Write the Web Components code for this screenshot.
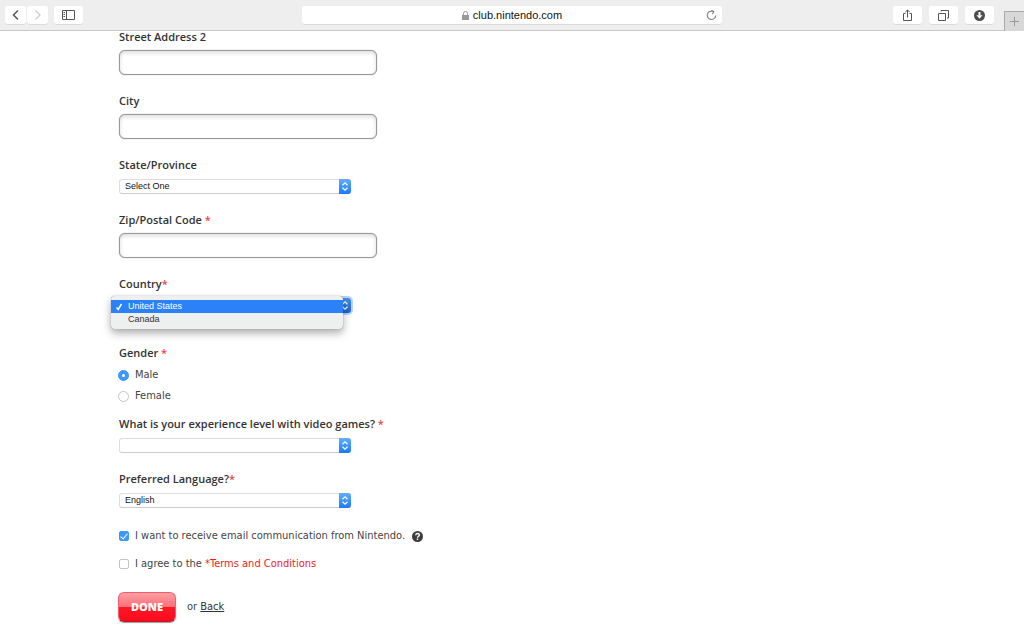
<!DOCTYPE html>
<html lang="en">
<head>
<meta charset="utf-8">
<meta name="viewport" content="width=device-width, initial-scale=1">
<title>Club Nintendo</title>
<style>
  body { margin: 0; background: #fff; color: #444; font: 11px/12px "DejaVu Sans Condensed", "Open Sans", sans-serif; }
</style>
</head>
<body>
<browser-toolbar>club.nintendo.com</browser-toolbar>
<account-form></account-form>

<script>
const define = (name, html, setup) => customElements.define(name, class extends HTMLElement {
  connectedCallback() {
    if (this.shadowRoot) return;
    const root = this.attachShadow({ mode: "open" });
    root.innerHTML = "<style>:host,*{box-sizing:border-box}</style>" + html;
    if (setup) setup(this, root);
  }
});

define("tool-button", `
  <style>
    :host { display: block; }
    button { display: flex; align-items: center; justify-content: center; width: 29px; height: 18px; padding: 0;
      border: 0; border-radius: 3px; background: #fff; color: #555; box-shadow: 0 1px 0 #dcdcdc; }
    :host([narrow]) button { width: 21px; }
    :host([faded]) button { color: #ccc; }
  </style>
  <button type="button"><slot></slot></button>`,
  (host, root) => root.querySelector("button").setAttribute("aria-label", host.getAttribute("name")));

define("browser-toolbar", `
  <style>
    :host { display: grid; grid-template-columns: 1fr 41% 1fr; height: 31px; background: #eee; border-bottom: 1px solid #c8c8c8; }
    nav, .right { display: flex; align-items: flex-start; padding-top: 6px; }
    nav { padding-left: 5px; gap: 1px; }
    nav tool-button:last-child { margin-left: 5px; }
    .right { justify-content: flex-end; gap: 7px; padding-top: 6px; }
    .address { display: grid; grid-template-columns: 21px 1fr 21px; align-items: center; height: 18px; margin-top: 6px;
      background: #fff; border-radius: 3px; box-shadow: 0 1px 0 #dcdcdc; }
    .url { grid-column: 2; display: flex; align-items: center; justify-content: center; gap: 4px; color: #111;
      font: 11px/18px "Liberation Sans", Arial, sans-serif; }
    svg { display: block; fill: none; stroke: currentColor; }
    .reload { padding: 0; border: 0; background: none; color: #888; justify-self: center; }
    .new { display: grid; place-items: center; width: 20px; height: 20px; margin: 5px 0 0 3px; padding: 0; color: #999;
      background: #d8d8d8; border: solid #aaa; border-width: 1px 0 0 1px; }
  </style>
  <nav>
    <tool-button narrow name="Back"><svg width="8" height="12" stroke-width="1.500"><path d="M6 1.500 1.500 6l4.500 4.500"/></svg></tool-button>
    <tool-button narrow faded name="Forward"><svg width="8" height="12" stroke-width="1.300"><path d="M1.500 1.500 6 6l-4.500 4.500"/></svg></tool-button>
    <tool-button name="Sidebar"><svg width="13" height="10"><path d="M.5.5h12v9H.5zM4.500.5v9M1.500 2.500H3M1.500 4.500H3M1.500 6.500H3"/></svg></tool-button>
  </nav>
  <div class="address">
    <div class="url"><svg width="7" height="9" style="color:#999"><path d="M1.500 4V2.500a2 2 0 0 1 4 0V4"/><path d="M0 4h7v5H0z" fill="currentColor" stroke="none"/></svg><slot></slot></div>
    <button class="reload" type="button" aria-label="Reload"><svg width="11" height="11" stroke-width="1.200"><path d="M7.500 1.600A4.200 4.200 0 1 0 9.700 5.500M5.300.2l2.500 1.500-1.500 2.500"/></svg></button>
  </div>
  <div class="right">
    <tool-button name="Share"><svg width="11" height="13"><path d="M3.500 4.500h-2v7h8v-7h-2M5.500 8.500V1M3.300 3.200l2.200-2.200 2.200 2.200"/></svg></tool-button>
    <tool-button name="Show tabs"><svg width="11" height="11"><path d="M.5 3.500h7v7h-7zM3 1.500V.5h7.500V8h-1.500"/></svg></tool-button>
    <tool-button name="Downloads"><svg width="11" height="11"><circle cx="5.500" cy="5.500" r="5.500" fill="#4d4d4d" stroke="none"/><path d="M5.500 2v3.500" stroke="#fff" stroke-width="2"/><path d="M2.500 5.200h6l-3 3.500z" fill="#fff" stroke="none"/></svg></tool-button>
    <button class="new" type="button" aria-label="New tab"><svg width="9" height="9"><path d="M4.500 0v9M0 4.500h9"/></svg></button>
  </div>`);

/* Heading shared by text boxes, menus and the radio group */
const headingStyle = `.title{display:block;padding:0;font:600 11px/12px "Open Sans","Noto Sans",sans-serif;color:#333;white-space:nowrap}.req{color:#f0434b}`;
const fillHeading = (host, root) => {
  root.querySelector(".title").firstChild.data = host.getAttribute("label");
  const mark = host.getAttribute("required-mark");
  root.querySelector(".req").textContent = mark === null ? "" : mark === "spaced" ? " *" : "*";
};

define("text-field", `
  <style>
    :host { display: block; }
    ${headingStyle}
    input { display: block; width: 100%; max-width: 258px; height: 25px; margin-top: 7px; padding: 0 6px; font: inherit;
      border: 1px solid #999; border-radius: 6px; background: #fff; outline: 0;
      box-shadow: inset 0 2px 4px #ddd, 0 0 1px #999; }
  </style>
  <label class="title" for="box">-<span class="req"></span></label>
  <input id="box" type="text">`, fillHeading);

define("select-field", `
  <style>
    :host { display: block; }
    ${headingStyle}
    .control { position: relative; display: grid; grid-template-columns: 1fr 12px; max-width: 232px; margin-top: 8px; }
    select { grid-area: 1 / 1 / 2 / 3; appearance: none; width: 100%; height: 15px; padding: 0 16px 0 5px; margin: 0;
      border: 1px solid #ddd; border-bottom-color: #ccc; border-radius: 3px; background: #fff; color: #111; outline: 0;
      font: 9px/13px "Liberation Sans", Arial, sans-serif; }
    svg { grid-area: 1 / 2; pointer-events: none; z-index: 1; border-radius: 0 3px 3px 0; background: linear-gradient(#62aefb, #1a7bfa); fill: none; stroke: #fff; stroke-width: 1.200; }
    :host([open]) svg { background: linear-gradient(#4b8fe4, #1262d6); box-shadow: 0 0 0 2px #b5d4fa; }
  </style>
  <label class="title" for="menu">-<span class="req"></span></label>
  <div class="control">
    <select id="menu"></select>
    <svg width="12" height="15"><path d="M3.500 6.200 6 3.800 8.500 6.200M3.500 8.800 6 11.200 8.500 8.800"/></svg>
    <slot></slot>
  </div>`,
  (host, root) => {
    fillHeading(host, root);
    const select = root.querySelector("select");
    host.getAttribute("options").split(",").forEach(text => select.add(new Option(text, text)));
  });

define("option-menu", `
  <style>
    :host { position: absolute; z-index: 2; top: -2px; left: -8px; right: 8px; padding: 4px 0 3px; border-radius: 4px;
      background: #eeefef; color: #333; box-shadow: 0 0 1px #777, 0 4px 9px #0005; font: 9px/13px "Liberation Sans", Arial, sans-serif; }
    div[role=option] { display: grid; grid-template-columns: 8px 1fr; gap: 5px; align-items: center; height: 13px; padding-left: 4px; }
    [aria-selected=true] { color: #fff; background: #2b82f8; }
    span { grid-column: 2; }
    svg { fill: none; stroke: #fff; stroke-width: 1.500; }
  </style>
  <div role="listbox" aria-label="Country">
    <div role="option" aria-selected="true"><svg width="8" height="8"><path d="M1.500 4.500 3.200 6.500 6.500 1"/></svg><span>United States</span></div>
    <div role="option" aria-selected="false"><span>Canada</span></div>
  </div>`);

define("choice-row", `
  <style>
    :host { display: block; }
    .row { display: flex; align-items: center; }
    label { line-height: 16px; white-space: nowrap; }
    input { flex: none; appearance: none; display: grid; place-items: center; width: 10px; height: 10px; margin: 0 6px 0 0;
      border: 1px solid #c4c4c4; border-radius: 2px; background: #fff; }
    input[type=radio] { width: 11px; height: 11px; margin-left: -1px; border-radius: 50%; }
    input:checked { border-color: #3b99fc; background: #3b99fc; }
    input[type=radio]:checked::before { content: ""; width: 3px; height: 3px; border-radius: 50%; background: #fff; }
    input[type=checkbox]:checked::before { content: ""; width: 3px; height: 6px; margin-bottom: 2px; border: solid #fff;
      border-width: 0 1px 1px 0; transform: rotate(40deg); }
  </style>
  <div class="row"><input id="choice"><label for="choice"><slot></slot></label><slot name="after"></slot></div>`,
  (host, root) => {
    const input = root.querySelector("input");
    input.type = host.getAttribute("type");
    input.checked = host.hasAttribute("checked");
    if (input.type === "radio") input.addEventListener("change", () => {
      for (const other of host.parentNode.querySelectorAll("choice-row"))
        if (other !== host) other.shadowRoot.querySelector("input").checked = false;
    });
  });

define("radio-group", `
  <style>
    :host { display: block; }
    ${headingStyle}
    fieldset { margin: 0; padding: 0; border: 0; min-width: 0; }
    .choices { display: grid; gap: 5px; margin-top: 8px; }
  </style>
  <fieldset><legend class="title">-<span class="req"></span></legend><div class="choices"><slot></slot></div></fieldset>`, fillHeading);

define("submit-button", `
  <style>
    :host { display: block; }
    button { display: block; width: 58px; height: 30px; padding: 0; border: 1px solid #f0626b; border-bottom-color: #c91520; border-radius: 6px;
      background: linear-gradient(#ff9ea4, #fd6f78 50%, #fb1828 50%, #fd0b1c); color: #fff; box-shadow: 0 1px 1px #999;
      font: 800 11px/28px "Open Sans", "Noto Sans", sans-serif; }
  </style>
  <button type="submit"><slot></slot></button>`);

define("account-form", `
  <style>
    :host { display: block; padding: 0 24px 18px 119px; }
    form { display: grid; gap: 20px; }
    radio-group { margin-top: 14px; }
    radio-group + select-field { margin-top: -6px; }
    .agreements { display: grid; gap: 12px; }
    .terms { color: #ec1c24; text-decoration: none; }
    .help { display: block; margin-left: 7px; padding: 0; border: 0; background: none; }
    .help svg { display: block; }
    .actions { display: flex; align-items: center; gap: 11px; margin-left: -1px; }
    .back { color: #333; }
  </style>
  <form>
    <text-field label="Street Address 2"></text-field>
    <text-field label="City"></text-field>
    <select-field label="State/Province" options="Select One"></select-field>
    <text-field label="Zip/Postal Code" required-mark="spaced"></text-field>
    <select-field label="Country" required-mark="tight" options="United States,Canada" open><option-menu></option-menu></select-field>
    <radio-group label="Gender" required-mark="spaced">
      <choice-row type="radio" checked>Male</choice-row>
      <choice-row type="radio">Female</choice-row>
    </radio-group>
    <select-field label="What is your experience level with video games?" required-mark="spaced" options=""></select-field>
    <select-field label="Preferred Language?" required-mark="tight" options="English"></select-field>
    <div class="agreements">
      <choice-row type="checkbox" checked>I want to receive email communication from Nintendo.
        <button slot="after" class="help" type="button" aria-label="Help"><svg width="11" height="11"><circle cx="5.500" cy="5.500" r="5.500" fill="#3d3d3d"/><path d="M3.700 4.300C3.700 1.900 7.400 2 7.300 4.100 7.200 5.400 5.500 5.200 5.500 6.700M5.500 7.600v1.400" fill="none" stroke="#fff" stroke-width="1.400"/></svg></button>
      </choice-row>
      <choice-row type="checkbox">I agree to the <a class="terms" href="#terms">*Terms and Conditions</a></choice-row>
    </div>
    <div class="actions">
      <submit-button>DONE</submit-button>
      <span>or <a class="back" href="#back">Back</a></span>
    </div>
  </form>`);
</script>
</body>
</html>
